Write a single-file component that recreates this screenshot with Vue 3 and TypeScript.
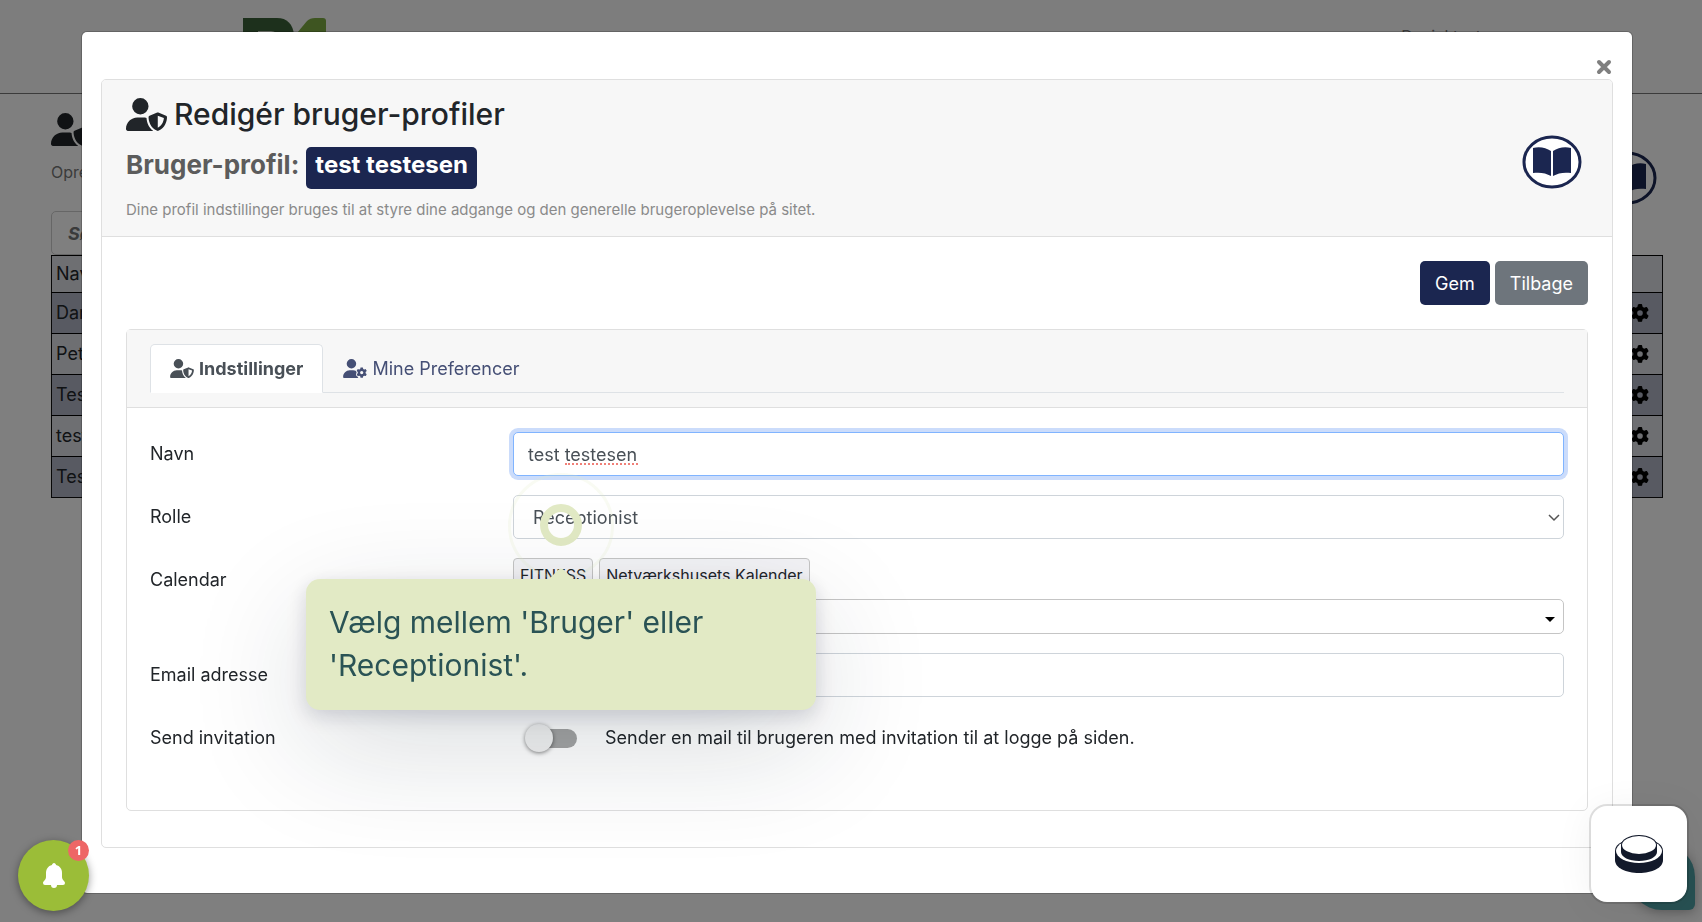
<script setup lang="ts">
import { ref } from 'vue'

const userShield =
  'M224 256A128 128 0 1 0 224 0a128 128 0 1 0 0 256zm-45.7 48C79.8 304 0 383.8 0 482.3C0 498.7 13.3 512 29.7 512H418.3c1.8 0 3.5-.2 5.3-.5c-76.3-55.1-99.8-141-103.1-200.2c-16.1-4.8-33.1-7.3-50.7-7.3H178.3zm308.8-78.3l-120 48C358 277.4 352 286.2 352 296c0 63.3 25.9 168.8 134.8 214.2c5.9 2.5 12.6 2.5 18.5 0C614.1 464.8 640 359.3 640 296c0-9.8-6-18.6-15.1-22.3l-120-48c-5.7-2.3-12.1-2.3-17.8 0zM591.4 312c-3.9 50.7-27.2 116.7-95.4 149.7V273.8L591.4 312z'
const userBody =
  'M224 256A128 128 0 1 0 224 0a128 128 0 1 0 0 256zm-45.7 48C79.8 304 0 383.8 0 482.3C0 498.7 13.3 512 29.7 512H412c-12-12-20-26-26-42c-24-12-44-34-40-62c2-14 10-26 18-38c-10-16-16-32-14-46c-24-13-52-20-80-20H178.3z'
const gear =
  'M495.9 166.6c3.2 8.7 .5 18.4-6.4 24.6l-43.3 39.4c1.1 8.3 1.7 16.8 1.7 25.4s-.6 17.1-1.7 25.4l43.3 39.4c6.9 6.2 9.6 15.9 6.4 24.6c-4.4 11.9-9.7 23.3-15.8 34.3l-4.7 8.1c-6.6 11-14 21.4-22.1 31.2c-5.9 7.2-15.7 9.6-24.5 6.8l-55.7-17.7c-13.4 10.3-28.2 18.9-44 25.4l-12.5 57.1c-2 9.1-9 16.3-18.2 17.8c-13.8 2.3-28 3.5-42.5 3.5s-28.7-1.2-42.5-3.5c-9.2-1.5-16.2-8.7-18.2-17.8l-12.5-57.1c-15.8-6.5-30.6-15.1-44-25.4L83.1 425.9c-8.8 2.8-18.6 .3-24.5-6.8c-8.1-9.8-15.5-20.2-22.1-31.2l-4.7-8.1c-6.1-11-11.4-22.4-15.8-34.3c-3.2-8.7-.5-18.4 6.4-24.6l43.3-39.4C64.6 273.1 64 264.6 64 256s.6-17.1 1.7-25.4L22.4 191.2c-6.9-6.2-9.6-15.9-6.4-24.6c4.4-11.9 9.7-23.3 15.8-34.3l4.7-8.1c6.6-11 14-21.4 22.1-31.2c5.9-7.2 15.7-9.6 24.5-6.8l55.7 17.7c13.4-10.3 28.2-18.9 44-25.4l12.5-57.1c2-9.1 9-16.3 18.2-17.8C227.3 1.2 241.5 0 256 0s28.7 1.2 42.5 3.5c9.2 1.5 16.2 8.7 18.2 17.8l12.5 57.1c15.8 6.5 30.6 15.1 44 25.4l55.7-17.7c8.8-2.8 18.6-.3 24.5 6.8c8.1 9.8 15.5 20.2 22.1 31.2l4.7 8.1c6.1 11 11.4 22.4 15.8 34.3zM256 336a80 80 0 1 0 0-160 80 80 0 1 0 0 160z'
const bookPages = 'M11 13C18 11 24 13 29 16V41C24 38 18 37 11 38ZM49 13C42 11 36 13 31 16V41C36 38 42 37 49 38Z'

const rows: string[] = ['Dan', 'Pet', 'Test', 'test', 'Test']
const tags: string[] = ['FITNESS', 'Netværkshusets Kalender']

const name = ref('test testesen')
const role = ref('Receptionist')
const email = ref('')
const invite = ref(false)
</script>

<template>
  <div class="page">
    <header class="site-header">
      <svg class="logo" viewBox="0 0 160 40" aria-hidden="true">
        <rect width="160" height="40" fill="#fff" fill-opacity=".3" />
        <path d="M0 5H34C44 5 50 11 51 22V40H0Z" fill="#3a6038" />
        <path d="M15 18H28Q34 18 35 24H15Z" fill="#e8f0e0" />
        <path d="M54 20L64 8Q67 5 72 5H80Q83 5 83 8V40H54Z" fill="#7cab42" />
      </svg>
      <span class="account">Daniel test</span>
    </header>
    <main class="listing">
      <div class="listing-head">
        <div>
          <svg class="icon-lg" viewBox="0 0 640 512" aria-hidden="true"><path :d="userShield" fill="currentColor" /></svg>
          <p class="listing-note">Opret</p>
        </div>
        <svg class="book" viewBox="0 0 60 54" aria-hidden="true">
          <ellipse cx="30" cy="27" rx="28" ry="25" fill="none" stroke="#1b2650" stroke-width="3" />
          <path :d="bookPages" fill="#1b2650" />
        </svg>
      </div>
      <input class="search" type="search" placeholder="Søg" aria-label="Søg" />
      <table class="users">
        <thead>
          <tr><th scope="col">Navn</th><td></td></tr>
        </thead>
        <tbody>
          <tr v-for="(row, i) in rows" :key="i">
            <td>{{ row }}</td>
            <td class="gear-cell">
              <svg class="gear" viewBox="0 0 512 512" aria-hidden="true"><path :d="gear" /></svg>
            </td>
          </tr>
        </tbody>
      </table>
    </main>
  </div>

  <div class="backdrop">
    <section class="modal" role="dialog" aria-modal="true" aria-labelledby="dialog-title">
      <div class="modal-top">
        <button class="close" type="button" aria-label="Luk">
          <svg viewBox="0 0 16 16" aria-hidden="true"><path d="M3 3L13 13M13 3L3 13" stroke="#7f7f7f" stroke-width="4" stroke-linecap="round" /></svg>
        </button>
      </div>

      <div class="card">
        <div class="card-header">
          <div>
            <h1 id="dialog-title">
              <svg class="icon-lg" viewBox="0 0 640 512" aria-hidden="true"><path :d="userShield" fill="currentColor" /></svg>
              Redigér bruger-profiler
            </h1>
            <h2>Bruger-profil: <span class="badge">test testesen</span></h2>
            <p>Dine profil indstillinger bruges til at styre dine adgange og den generelle brugeroplevelse på sitet.</p>
          </div>
          <a href="#" class="guide" aria-label="Vejledning">
            <svg class="book" viewBox="0 0 60 54" aria-hidden="true">
              <ellipse cx="30" cy="27" rx="28" ry="25" fill="#fff" stroke="#1b2650" stroke-width="3" />
              <path :d="bookPages" fill="#1b2650" />
            </svg>
          </a>
        </div>

        <div class="card-body">
          <div class="actions">
            <button class="btn primary" type="button">Gem</button>
            <button class="btn secondary" type="button">Tilbage</button>
          </div>

          <div class="panel">
            <div class="panel-header">
              <nav class="tabs">
                <a href="#" class="tab active">
                  <svg class="icon-sm" viewBox="0 0 640 512" aria-hidden="true"><path :d="userShield" fill="currentColor" /></svg>
                  Indstillinger
                </a>
                <a href="#" class="tab">
                  <svg class="icon-sm" viewBox="0 0 640 512" aria-hidden="true">
                    <path :d="userBody" fill="currentColor" />
                    <path :d="gear" fill="currentColor" transform="translate(360 226) scale(.55)" />
                  </svg>
                  Mine Preferencer
                </a>
              </nav>
            </div>

            <form class="form" @submit.prevent>
              <div class="row">
                <label for="name">Navn</label>
                <div class="field">
                  <input id="name" v-model="name" class="control focused" type="text" />
                  <span class="spelling"></span>
                </div>
              </div>

              <div class="row">
                <label for="role">Rolle</label>
                <div class="field">
                  <select id="role" v-model="role" class="control role">
                    <option>Receptionist</option>
                    <option>Bruger</option>
                  </select>
                  <svg class="chevron" viewBox="0 0 12 8" aria-hidden="true"><path d="M1 1L6 6L11 1" fill="none" stroke="#555" stroke-width="1.5" /></svg>
                  <span class="pulse"></span>
                  <span class="beacon"></span>
                  <div class="tip" role="tooltip">
                    <svg class="tip-arrow" viewBox="0 0 26 12" aria-hidden="true"><path d="M0 12L9 3Q13 -2 17 3L26 12Z" fill="#e2eac5" /></svg>
                    Vælg mellem 'Bruger' eller 'Receptionist'.
                  </div>
                </div>
              </div>

              <div class="row">
                <label for="calendar">Calendar</label>
                <div class="field">
                  <div class="tags">
                    <span v-for="tag in tags" :key="tag" class="tag">{{ tag }}</span>
                  </div>
                  <div class="field">
                    <select id="calendar" class="control calendar"></select>
                    <svg class="caret" viewBox="0 0 10 5" aria-hidden="true"><path d="M0 0H10L5 5Z" /></svg>
                  </div>
                </div>
              </div>

              <div class="row">
                <label for="email">Email adresse</label>
                <div class="field"><input id="email" v-model="email" class="control" type="email" /></div>
              </div>

              <div class="row">
                <label for="invite">Send invitation</label>
                <div class="field switch-field">
                  <input id="invite" v-model="invite" class="switch" type="checkbox" />
                  <span>Sender en mail til brugeren med invitation til at logge på siden.</span>
                </div>
              </div>
            </form>
          </div>
        </div>
      </div>
    </section>
  </div>

  <button class="bell" type="button" aria-label="Notifikationer">
    <svg viewBox="0 0 22 26" aria-hidden="true">
      <path d="M11 0C12 0 13 1 13 2C17 3 19 6 19 10V14C19 17 22 18 22 20Q22 22 20 22H2Q0 22 0 20C0 18 3 17 3 14V10C3 6 5 3 9 2C9 1 10 0 11 0ZM8 22H14Q14 25 11 25Q8 25 8 22Z" fill="#fff" />
    </svg>
    <span class="count">1</span>
  </button>

  <span class="chat"></span>
  <button class="launcher" type="button" aria-label="Hjælp">
    <svg viewBox="0 0 48 38" aria-hidden="true">
      <path d="M0 16C0 8 10 4 24 4S48 8 48 16V25C48 33 37 38 24 38S0 33 0 25Z" fill="#131a2b" />
      <ellipse cx="24" cy="16" rx="23" ry="12" fill="#fff" />
      <path d="M6 10H42V17C42 22 34 26 24 26S6 22 6 17Z" fill="#131a2b" />
      <ellipse cx="24" cy="10" rx="18" ry="10" fill="#131a2b" />
      <ellipse cx="24" cy="10" rx="17" ry="9" fill="#fff" />
    </svg>
  </button>
</template>

<style>
body {
  margin: 0;
  background: #fff;
}
</style>

<style scoped>
* {
  box-sizing: border-box;
}

.page,
.backdrop,
.bell {
  font-family: Inter, "Liberation Sans", sans-serif;
  font-size: 18px;
  line-height: 28px;
  color: #212529;
}

.page {
  height: 100vh;
  overflow: hidden;
}

.site-header {
  height: 94px;
  display: flex;
  justify-content: space-between;
  align-items: flex-start;
  padding: 13px 221px 0 243px;
  background: #fafafa;
  border-bottom: 1px solid #777;
}

.logo {
  width: 160px;
  height: 40px;
}

.account {
  font-size: 16px;
  line-height: 20px;
  margin-top: 13px;
  color: #777;
}

.listing {
  padding: 19px 39px 0 51px;
}

.listing-head {
  display: flex;
  justify-content: space-between;
  align-items: flex-start;
  padding-right: 6px;
  height: 92px;
}

.listing-head .book {
  align-self: flex-end;
}

.listing-note {
  margin: 12px 0 0;
  font-size: 16px;
  color: #777;
}

.icon-lg {
  width: 41px;
  height: 33px;
  display: block;
}

.book {
  width: 60px;
  height: 54px;
  display: block;
}

.search {
  display: block;
  width: 240px;
  height: 44px;
  margin-top: 6px;
  padding: 0 16px;
  border: 1px solid #ccc;
  border-radius: 5px;
  background: #fff;
  font: italic bold 18px Inter, "Liberation Sans", sans-serif;
}

.users {
  width: 100%;
  border-collapse: collapse;
  border: 1px solid #111;
}

.users th,
.users td {
  height: 41px;
  padding: 0 4px;
  text-align: left;
  font-weight: 400;
  border-top: 1px solid #000;
}

.users thead tr {
  background: #dcdee4;
}

.users thead th,
.users thead td {
  height: 37px;
}

.users tbody tr:nth-child(odd) {
  background: #b0b4c4;
}

.users tbody tr:nth-child(even) {
  background: #dcdee4;
}

.users .gear-cell {
  width: 60px;
  padding-right: 13px;
}

.gear {
  display: block;
  width: 18px;
  height: 18px;
  margin-left: auto;
}

.backdrop {
  position: fixed;
  inset: 0;
  padding: 32px 70px 29px 82px;
  background: rgba(0, 0, 0, 0.5);
  overflow: hidden;
}

.modal {
  padding: 0 19px 45px;
  background: #fff;
  border-radius: 5px;
  box-shadow: 0 0 0 1px rgba(0, 0, 0, 0.2);
}

.modal-top {
  height: 47px;
  display: flex;
  justify-content: flex-end;
  align-items: flex-end;
}

.close {
  margin: 0 1px 4px 0;
  padding: 0;
  border: 0;
  background: none;
}

.close svg {
  display: block;
  width: 16px;
  height: 16px;
}

.card {
  border: 1px solid #dfdfdf;
  border-radius: 5px;
}

.card-header {
  display: flex;
  justify-content: space-between;
  align-items: flex-start;
  padding: 15px 30px 12px 24px;
  background: #f7f7f7;
  border-bottom: 1px solid #dfdfdf;
  border-radius: 4px 4px 0 0;
}

h1,
h2,
.card-header p {
  margin: 0;
}

h1 {
  display: flex;
  align-items: center;
  gap: 7px;
  font-size: 30px;
  line-height: 38px;
  font-weight: 500;
}

h2 {
  display: flex;
  align-items: flex-start;
  gap: 7px;
  margin-top: 14px;
  font-size: 26px;
  line-height: 36px;
  font-weight: 700;
  color: #5c5c5c;
}

.badge {
  height: 42px;
  padding: 0 9px;
  border-radius: 5px;
  background: #1b2650;
  color: #fff;
  font-size: 24px;
}

.card-header p {
  margin-top: 7px;
  font-size: 15px;
  color: #8a8a8a;
}

.guide {
  margin-top: 40px;
}

.card-body {
  padding: 24px 24px 36px;
}

.actions {
  display: flex;
  justify-content: flex-end;
  gap: 5px;
}

.btn {
  height: 44px;
  padding: 0 15px;
  border: 0;
  border-radius: 5px;
  color: #fff;
  font: 18px Inter, "Liberation Sans", sans-serif;
}

.primary {
  background: #1b2650;
}

.secondary {
  background: #6e757c;
}

.panel {
  margin-top: 24px;
  border: 1px solid #dfdfdf;
  border-radius: 5px;
}

.panel-header {
  padding: 14px 23px 14px;
  background: #f7f7f7;
  border-bottom: 1px solid #dfdfdf;
}

.tabs {
  display: flex;
  border-bottom: 1px solid #dee2e6;
}

.tab {
  display: flex;
  align-items: center;
  gap: 5px;
  height: 49px;
  margin-bottom: -1px;
  padding: 0 19px;
  border: 1px solid transparent;
  border-radius: 5px 5px 0 0;
  color: #454f75;
  text-decoration: none;
}

.tab.active {
  border-color: #dee2e6;
  border-bottom-color: #fff;
  background: #fff;
  color: #495057;
  font-weight: 700;
  font-size: 18px;
}

.icon-sm {
  width: 24px;
  height: 19px;
}

.form {
  display: flex;
  flex-direction: column;
  gap: 19px;
  padding: 24px 23px 50px;
}

.row {
  display: flex;
  align-items: flex-start;
}

.row > label {
  width: 363px;
  flex: none;
  line-height: 44px;
}

.field {
  position: relative;
  flex: 1;
}

.control {
  display: block;
  width: 100%;
  height: 44px;
  padding: 0 14px;
  border: 1px solid #ced4da;
  border-radius: 5px;
  background: #fff;
  color: #495057;
  font: 18px Inter, "Liberation Sans", sans-serif;
  appearance: none;
}

.control.focused {
  border-color: #80b4ff;
  box-shadow: 0 0 0 4px #cbdcfb;
  outline: 0;
}

.control.role {
  padding-left: 19px;
}

.control.calendar {
  height: 35px;
  border-color: #c5c5c5;
}

.spelling {
  position: absolute;
  left: 52px;
  top: 31px;
  width: 73px;
  border-bottom: 2px dotted #f08078;
}

.chevron {
  position: absolute;
  right: 4px;
  top: 19px;
  width: 12px;
  height: 8px;
}

.caret {
  position: absolute;
  right: 9px;
  top: 18px;
  width: 10px;
  height: 5px;
}

.tags {
  display: flex;
  gap: 6px;
  margin-bottom: 6px;
}

.tag {
  height: 35px;
  padding: 0 6px;
  border: 1px solid #c5c5c5;
  border-radius: 4px;
  background: #f3f3f6;
  font-size: 16px;
  line-height: 33px;
}

.switch-field {
  display: flex;
  align-items: center;
  height: 44px;
  gap: 28px;
  padding-left: 14px;
}

.switch {
  appearance: none;
  position: relative;
  width: 50px;
  height: 19px;
  margin: 0;
  border-radius: 10px;
  background: #a3a3a3;
}

.switch::before {
  content: "";
  position: absolute;
  left: -2px;
  top: -5px;
  width: 28px;
  height: 28px;
  border-radius: 50%;
  background: #f1f1f1;
  box-shadow: 0 1px 4px rgba(0, 0, 0, 0.5);
}

.pulse {
  position: absolute;
  z-index: 2;
  left: -5px;
  top: -22px;
  width: 106px;
  height: 106px;
  border: 3px solid rgba(226, 234, 197, 0.2);
  border-radius: 50%;
}

.beacon {
  position: absolute;
  z-index: 2;
  left: 27px;
  top: 9px;
  width: 42px;
  height: 42px;
  border: 8px solid #e2eac5;
  border-radius: 50%;
}

.tip {
  position: absolute;
  z-index: 2;
  left: -207px;
  top: 84px;
  width: 510px;
  padding: 22px 23px 23px;
  border-radius: 14px;
  background: #e2eac5;
  color: #2a5355;
  font-size: 30px;
  line-height: 43px;
  box-shadow: 0 6px 20px rgba(20, 20, 50, 0.16), 0 36px 120px rgba(20, 40, 50, 0.16);
}

.tip-arrow {
  position: absolute;
  left: 242px;
  top: -11px;
  width: 26px;
  height: 12px;
}

.bell {
  position: fixed;
  left: 18px;
  bottom: 11px;
  width: 71px;
  height: 71px;
  display: flex;
  align-items: center;
  justify-content: center;
  padding: 0;
  border: 0;
  border-radius: 50%;
  background: #9bbd38;
  box-shadow: 0 2px 8px rgba(0, 0, 0, 0.4);
}

.bell svg {
  width: 22px;
  height: 26px;
}

.count {
  position: absolute;
  right: 0;
  top: 0;
  width: 21px;
  height: 21px;
  border-radius: 50%;
  background: #ee6666;
  color: #fff;
  font: bold 13px/21px "Open Sans", sans-serif;
}

.chat {
  position: fixed;
  right: 7px;
  bottom: 12px;
  width: 66px;
  height: 66px;
  border-radius: 33px 33px 6px 33px;
  background: #275052;
  box-shadow: 0 2px 12px rgba(0, 0, 0, 0.3);
}

.launcher {
  position: fixed;
  right: 15px;
  bottom: 20px;
  width: 96px;
  height: 96px;
  display: flex;
  align-items: center;
  justify-content: center;
  padding: 0;
  border: 0;
  border-radius: 16px;
  background: #fff;
  box-shadow: 0 0 0 2px rgba(0, 0, 0, 0.12), 0 4px 40px rgba(0, 0, 0, 0.06);
}

.launcher svg {
  width: 48px;
  height: 38px;
}
</style>
